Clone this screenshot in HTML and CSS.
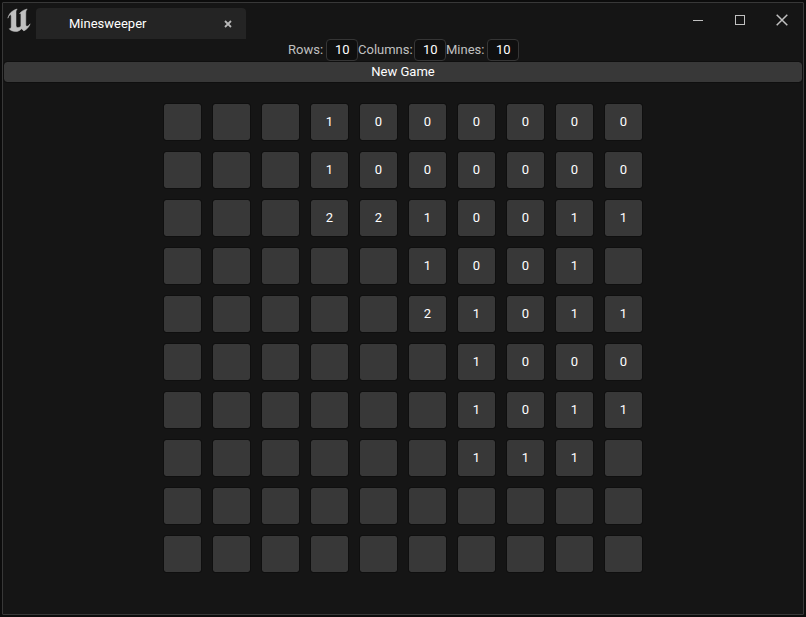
FILE: index.html
```html
<!DOCTYPE html>
<html lang="en">
<head>
<meta charset="utf-8">
<title>Minesweeper</title>
<link rel="stylesheet" href="styles.css">
</head>
<body>
<div class="window">
  <header class="titlebar">
    <svg class="logo" width="24" height="26" viewBox="0 0 24 26" aria-hidden="true">
      <path fill="#c0c0c0" stroke="#c0c0c0" stroke-width=".5" d="M0.900 10.200C1.800 6 4.700 2.400 10.200 1C9 2.400 9 3.200 9 4.800V17.200C9 18.700 9.700 19.600 10.900 19.600C12 19.600 13 19 13.900 18.200V6.700C13.900 5.600 13.500 5.200 12.500 5.600C14.400 3.200 17 1.700 20.200 1C19 2.300 18.800 3.500 18.800 5V16.600C18.800 17.700 19.200 18.300 19.900 18.300C21 18.300 22.200 17.200 23.100 15.800C22.200 18.900 20.100 21.200 16.900 22.900L14.500 20.700C13.100 22.600 11.100 23.500 8.500 23.500C5.800 23.500 3.300 22.500 2.200 20.700C3.400 21 4.200 20.100 4.200 18.600V8.400C4.200 7.100 3.800 6.600 3 6.900C2 7.300 1.500 8.600 .9 10.200Z"/>
    </svg>
    <div class="tab">
      <span class="tab-title">Minesweeper</span>
      <svg width="8" height="8" viewBox="0 0 8 8"><path d="M1 1L7 7M7 1L1 7" stroke="#b8b8b8" stroke-width="1.8"/></svg>
    </div>
    <div class="controls">
      <svg width="12" height="14" viewBox="0 0 12 14"><path d="M1 7.500H11" stroke="#c0c0c0"/></svg>
      <svg width="12" height="14" viewBox="0 0 12 14"><rect x="1.500" y="2.500" width="9" height="9" fill="none" stroke="#c0c0c0"/></svg>
      <svg width="12" height="14" viewBox="0 0 12 14"><path d="M.7 1.700L11.300 12.300M11.300 1.700L.7 12.300" stroke="#c0c0c0" stroke-width="1.500"/></svg>
    </div>
  </header>
  <div class="settings">
    <span class="label rows">Rows:</span><span class="field">10</span>
    <span class="label columns">Columns:</span><span class="field">10</span>
    <span class="label mines">Mines:</span><span class="field">10</span>
  </div>
  <div class="new-game">New Game</div>
  <main class="board" id="board"></main>
</div>
<script src="board.js"></script>
</body>
</html>
```
FILE: styles.css
```css
* { box-sizing: border-box; }
body {
  margin: 0;
  width: 806px;
  height: 617px;
  padding: 2px;
  background: #0c0c0c;
  font: 13px/16px Roboto, sans-serif;
  color: #fff;
  overflow: hidden;
}
.window {
  width: 802px;
  height: 613px;
  border: 1px solid #383838;
  border-radius: 1px;
  background: #151515;
}
svg { display: block; flex: none; }
.titlebar {
  display: flex;
  height: 36px;
  padding: 5px 15px 0 4px;
}
.logo { margin-right: 5px; }
.tab {
  display: flex;
  align-items: center;
  justify-content: space-between;
  width: 210px;
  height: 31px;
  padding: 0 14px 0 33px;
  border-radius: 4px 4px 0 0;
  background: #242424;
}
.controls {
  display: flex;
  gap: 30px;
  margin: 5px 0 0 auto;
}
.settings {
  display: flex;
  align-items: center;
  width: 231px;
  height: 22px;
  margin-left: 285px;
}
.label { color: #c0c0c0; white-space: nowrap; }
.rows { width: 38px; }
.columns { width: 56px; }
.mines { width: 41px; }
.field {
  width: 32px;
  height: 22px;
  padding-left: 8px;
  border: 1px solid #353535;
  border-radius: 4px;
  background: #0f0f0f;
  line-height: 20px;
}
.new-game {
  height: 22px;
  border: 1px solid #0f0f0f;
  border-radius: 4px;
  background: #383838;
  background-clip: padding-box;
  text-align: center;
  line-height: 19px;
}
.board {
  display: grid;
  grid-template-columns: repeat(10, 39px);
  grid-auto-rows: 38px;
  gap: 10px;
  margin: 20px 0 0 160px;
}
.cell {
  border: 1px solid #0f0f0f;
  border-radius: 3px;
  background: #383838;
  background-clip: padding-box;
  text-align: center;
  line-height: 35px;
}
```
FILE: board.js
```js
// One string per row; a dot is a covered cell.
const rows = [
  "...1000000",
  "...1000000",
  "...2210011",
  ".....1001.",
  ".....21011",
  "......1000",
  "......1011",
  "......111.",
  "..........",
  ".........."
];
const board = document.getElementById("board");
for (const row of rows) {
  for (const value of row) {
    const cell = document.createElement("div");
    cell.className = "cell";
    if (value !== ".") cell.textContent = value;
    board.append(cell);
  }
}
```
